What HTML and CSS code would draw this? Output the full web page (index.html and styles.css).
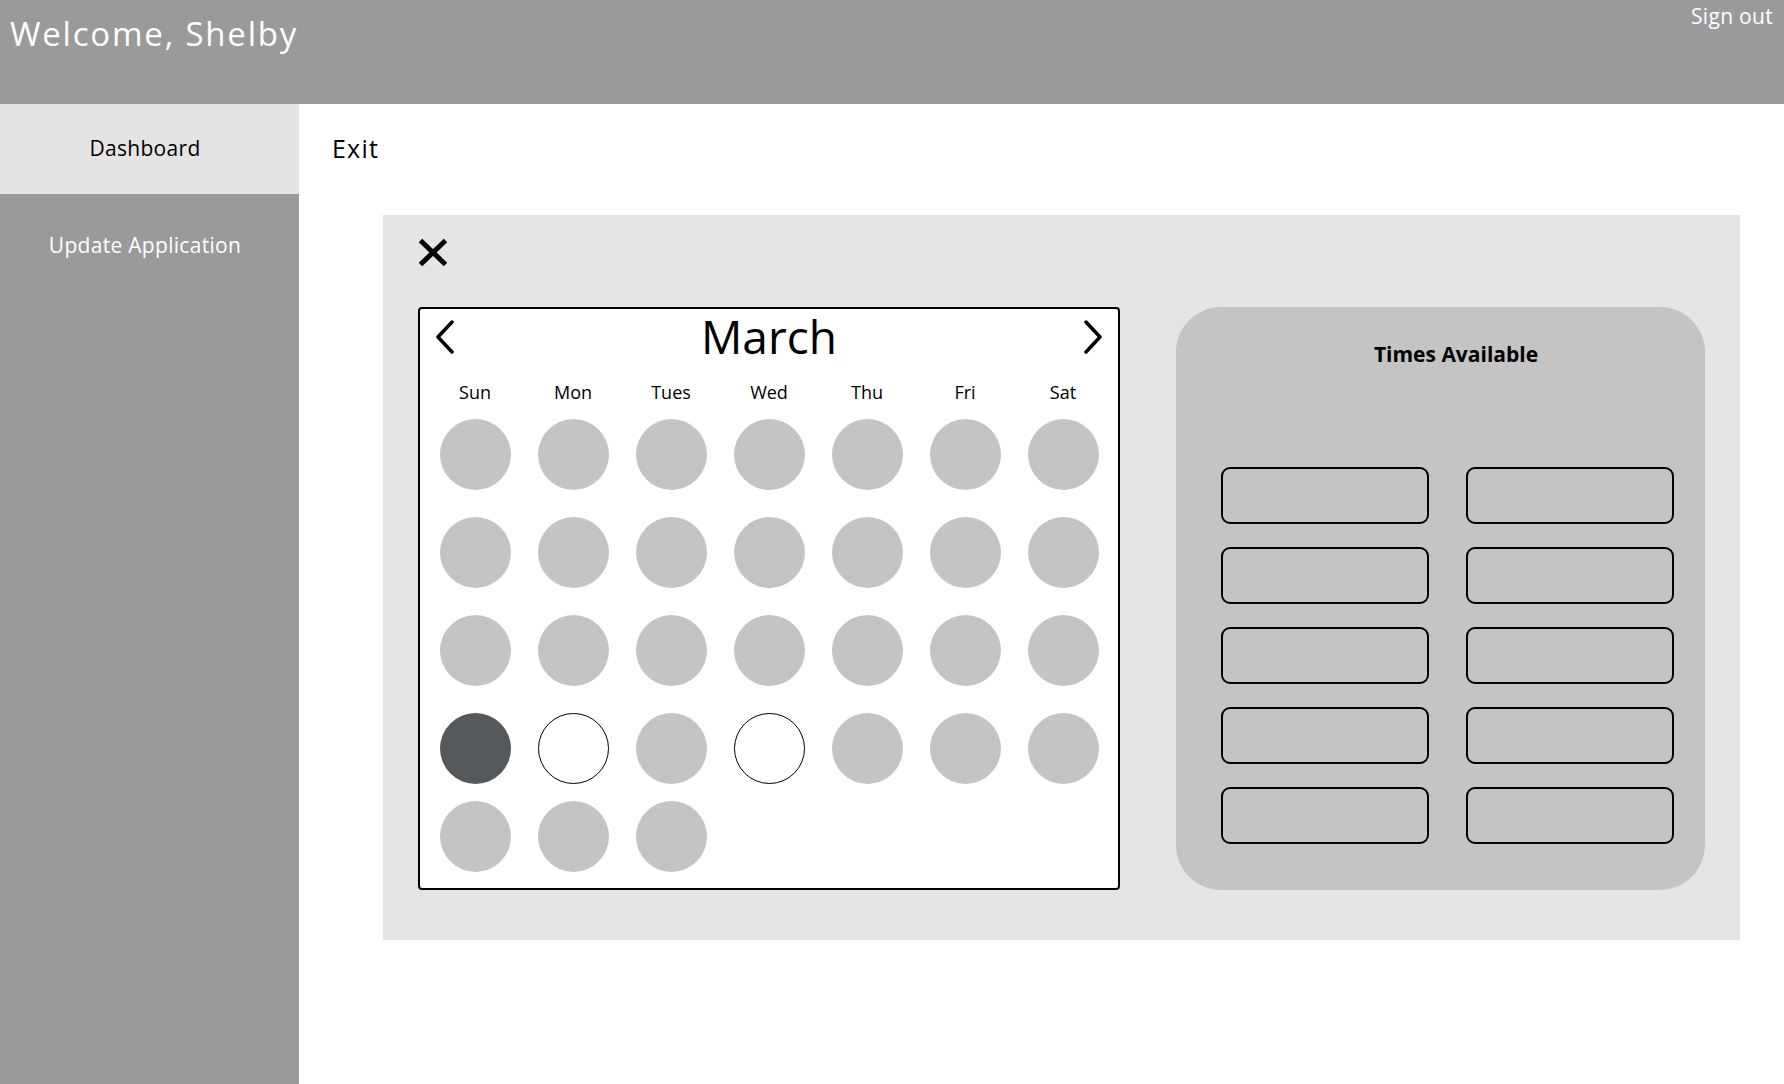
FILE: index.html
```html
<!DOCTYPE html>
<html lang="en">
<head>
  <meta charset="UTF-8">
  <meta name="viewport" content="width=device-width, initial-scale=1">
  <title>Schedule an Appointment</title>
  <link rel="stylesheet" href="styles.css">
</head>
<body>
  <header class="topbar">
    <h1 class="welcome">Welcome, Shelby</h1>
    <a class="signout" href="#">Sign out</a>
  </header>

  <div class="layout">
    <nav class="sidebar">
      <a class="nav-item active" href="#">Dashboard</a>
      <a class="nav-item" href="#">Update Application</a>
    </nav>

    <main class="content">
      <a class="exit" href="#">Exit</a>

      <section class="modal">
        <button class="close" type="button" aria-label="Close">
          <svg width="30" height="29" viewBox="0 0 30 29"><path d="M2.5 2.5 L27.5 26.5 M27.5 2.5 L2.5 26.5" stroke="#000" stroke-width="5" fill="none"/></svg>
        </button>

        <div class="modal-body">
          <div class="calendar">
            <div class="cal-head">
              <button class="arrow" type="button" aria-label="Previous month">
                <svg width="20" height="34" viewBox="0 0 20 34"><polyline points="17,2 3,17 17,32" stroke="#000" stroke-width="3.5" stroke-linecap="round" stroke-linejoin="round" fill="none"/></svg>
              </button>
              <span class="month">March</span>
              <button class="arrow" type="button" aria-label="Next month">
                <svg width="20" height="34" viewBox="0 0 20 34"><polyline points="3,2 17,17 3,32" stroke="#000" stroke-width="3.5" stroke-linecap="round" stroke-linejoin="round" fill="none"/></svg>
              </button>
            </div>

            <div class="weekdays">
              <span>Sun</span><span>Mon</span><span>Tues</span><span>Wed</span><span>Thu</span><span>Fri</span><span>Sat</span>
            </div>

            <div class="dates">
              <span class="day"></span><span class="day"></span><span class="day"></span><span class="day"></span><span class="day"></span><span class="day"></span><span class="day"></span>
              <span class="day"></span><span class="day"></span><span class="day"></span><span class="day"></span><span class="day"></span><span class="day"></span><span class="day"></span>
              <span class="day"></span><span class="day"></span><span class="day"></span><span class="day"></span><span class="day"></span><span class="day"></span><span class="day"></span>
              <span class="day selected"></span><span class="day open"></span><span class="day"></span><span class="day open"></span><span class="day"></span><span class="day"></span><span class="day"></span>
              <span class="day late"></span><span class="day late"></span><span class="day late"></span>
            </div>
          </div>

          <div class="times">
            <h2 class="times-title">Times Available</h2>
            <div class="slots">
              <button class="slot" type="button"></button>
              <button class="slot" type="button"></button>
              <button class="slot" type="button"></button>
              <button class="slot" type="button"></button>
              <button class="slot" type="button"></button>
              <button class="slot" type="button"></button>
              <button class="slot" type="button"></button>
              <button class="slot" type="button"></button>
              <button class="slot" type="button"></button>
              <button class="slot" type="button"></button>
            </div>
          </div>
        </div>
      </section>
    </main>
  </div>
</body>
</html>
```

FILE: styles.css
```css
* { box-sizing: border-box; }
body { margin: 0; font-family: "Open Sans", "Noto Sans", sans-serif; background: #fff; color: #000; }
a { color: inherit; text-decoration: none; }
button { font: inherit; border: none; background: none; padding: 0; cursor: pointer; }

.topbar { height: 104px; background: #9a9a9a; color: #fff; display: flex; justify-content: space-between; align-items: flex-start; padding: 0 11px 0 10px; }
.welcome { margin: 11px 0 0; font-size: 33px; font-weight: 400; letter-spacing: 1.8px; }
.signout { margin-top: 2px; font-size: 21px; letter-spacing: 0.3px; }

.layout { display: flex; min-height: calc(100vh - 104px); }

.sidebar { width: 299px; flex-shrink: 0; background: #9a9a9a; display: flex; flex-direction: column; gap: 7px; }
.nav-item { height: 90px; padding: 0 9px 2px 0; display: flex; align-items: center; justify-content: center; font-size: 21px; letter-spacing: 0.3px; color: #fff; }
.nav-item.active { background: #e5e4e5; color: #000; }

.content { flex: 1; padding: 27px 0 0 33px; }
.exit { display: inline-block; font-size: 25px; letter-spacing: 1.2px; }

.modal { width: 1357px; margin: 50px 0 0 51px; background: #e5e5e5; padding: 23px 34px 50px 35px; }
.close { display: block; width: 30px; height: 29px; margin-bottom: 40px; }
.close svg { display: block; }

.modal-body { display: flex; gap: 56px; }

.calendar { width: 702px; height: 583px; border: 2px solid #000; border-radius: 4px; background: #fff; padding: 0 6px; }
.cal-head { height: 55px; display: flex; align-items: center; justify-content: space-between; padding: 0 9px; }
.arrow svg { display: block; }
.month { font-size: 46px; line-height: 55px; }

.weekdays { display: grid; grid-template-columns: repeat(7, 1fr); text-align: center; font-size: 18px; margin-top: 16px; }

.dates { display: grid; grid-template-columns: repeat(7, 1fr); row-gap: 27px; justify-items: center; margin-top: 15px; }
.day { width: 71px; height: 71px; border-radius: 50%; background: #c4c4c4; }
.day.selected { background: #54585a; }
.day.open { background: #fff; border: 1px solid #000; }
.day.late { margin-top: -10px; }

.times { width: 529px; height: 583px; background: #c4c4c4; border-radius: 45px; padding: 33px 31px 45px 45px; }
.times-title { margin: 0; font-size: 21px; font-weight: 700; text-align: center; padding-left: 17px; }
.slots { display: grid; grid-template-columns: 208px 208px; column-gap: 37px; row-gap: 23px; margin-top: 99px; }
.slot { height: 57px; border: 2px solid #000; border-radius: 9px; background: #c4c4c4; }
```
